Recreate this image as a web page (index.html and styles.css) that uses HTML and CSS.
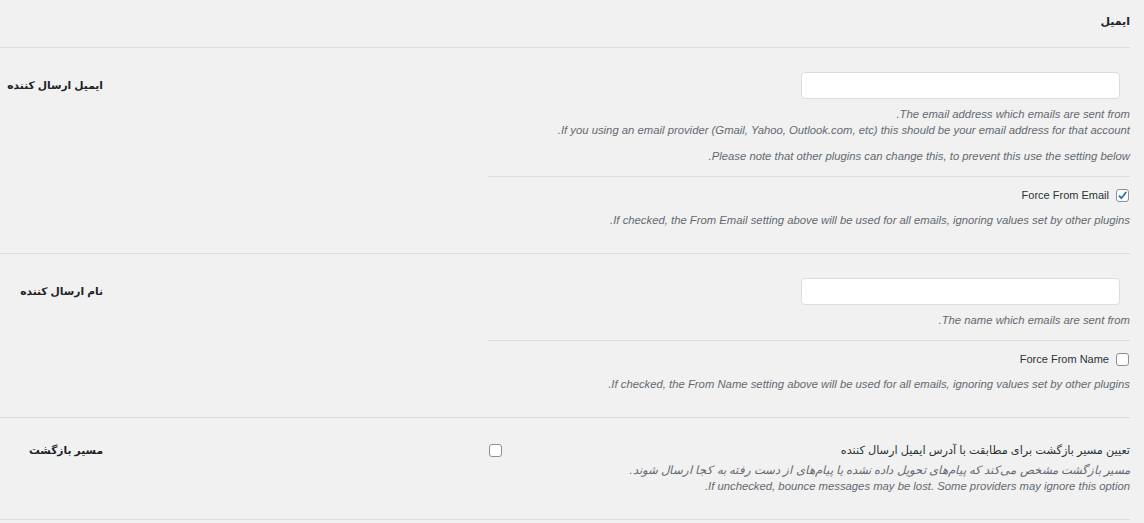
FILE: index.html
```html
<!DOCTYPE html>
<html lang="fa" dir="rtl">
<head>
    <meta charset="UTF-8">
    <meta name="viewport" content="width=device-width, initial-scale=1.0">
    <title>ایمیل</title>
    <link rel="stylesheet" href="styles.css">
</head>
<body>
    <div class="wrap">
        <h2 class="section-title">ایمیل</h2>

        <div class="setting">
            <div class="setting-label setting-label--input">ایمیل ارسال کننده</div>
            <div class="setting-field">
                <input class="text-input" type="text">
                <p class="desc">The email address which emails are sent from.</p>
                <p class="desc">If you using an email provider (Gmail, Yahoo, Outlook.com, etc) this should be your email address for that account.</p>
                <p class="desc desc--spaced">Please note that other plugins can change this, to prevent this use the setting below.</p>
                <div class="sub">
                    <div class="check-line">
                        <span class="box box--checked">
                            <svg viewBox="0 0 13 13" width="13" height="13"><path d="M3 6.6l2.4 2.6L10.2 3" fill="none" stroke="#2271b1" stroke-width="1.8"/></svg>
                        </span>
                        <span class="check-text">Force From Email</span>
                    </div>
                    <p class="desc desc--after-check">If checked, the From Email setting above will be used for all emails, ignoring values set by other plugins.</p>
                </div>
            </div>
        </div>

        <div class="setting">
            <div class="setting-label setting-label--input">نام ارسال کننده</div>
            <div class="setting-field">
                <input class="text-input" type="text">
                <p class="desc">The name which emails are sent from.</p>
                <div class="sub">
                    <div class="check-line">
                        <span class="box"></span>
                        <span class="check-text">Force From Name</span>
                    </div>
                    <p class="desc desc--after-check">If checked, the From Name setting above will be used for all emails, ignoring values set by other plugins.</p>
                </div>
            </div>
        </div>

        <div class="setting">
            <div class="setting-label">مسیر بازگشت</div>
            <div class="setting-field">
                <div class="check-line check-line--wide">
                    <span class="check-text check-text--fa">تعیین مسیر بازگشت برای مطابقت با آدرس ایمیل ارسال کننده</span>
                    <span class="box"></span>
                </div>
                <p class="desc desc--near desc--fa">مسیر بازگشت مشخص می‌کند که پیام‌های تحویل داده نشده یا پیام‌های از دست رفته به کجا ارسال شوند.</p>
                <p class="desc">If unchecked, bounce messages may be lost. Some providers may ignore this option.</p>
            </div>
        </div>
    </div>
</body>
</html>
```

FILE: styles.css
```css
*{
    box-sizing: border-box;
}
body{
    margin: 0;
    background-color: #f1f1f1;
    font-family: "Liberation Sans", "DejaVu Sans", sans-serif;
    font-size: 11px;
    color: #3c434a;
}
.wrap{
    margin-right: 14px;
}
.section-title{
    margin: 0;
    padding: 13px 0 18px;
    font-size: 11px;
    line-height: 16px;
    color: #1d2327;
    border-bottom: 1px solid #dcdcde;
}
.setting{
    display: flex;
    flex-direction: row-reverse;
    justify-content: space-between;
    padding: 24px 0 25px;
    border-bottom: 1px solid #dcdcde;
}
.setting-label{
    width: 103px;
    font-weight: bold;
    font-size: 10.7px;
    line-height: 16px;
    color: #1d2327;
}
.setting-label--input{
    padding-top: 5px;
}
.setting-field{
    width: 642px;
}
.text-input{
    display: block;
    width: 319px;
    height: 27px;
    margin: 0 10px 7px 0;
    border: 1px solid #dcdcde;
    border-radius: 4px;
    background: #fff;
}
.desc{
    margin: 0;
    font-size: 11.3px;
    font-style: italic;
    line-height: 16px;
    color: #646970;
}
.desc--fa{
    font-size: 11.7px;
}
.desc--spaced{
    margin-top: 10px;
}
.desc--after-check{
    margin-top: 9px;
}
.desc--near{
    margin-top: 4px;
}
.sub{
    margin-top: 12px;
    padding-top: 10px;
    border-top: 1px solid #dcdcde;
}
.check-line{
    display: flex;
    align-items: center;
    gap: 6px;
    height: 16px;
    line-height: 16px;
}
.check-line--wide{
    justify-content: space-between;
}
.check-text{
    color: #2c3338;
}
.check-text--fa{
    font-size: 11.3px;
}
.box{
    width: 13px;
    height: 13px;
    margin: 0 1px;
    border: 1px solid #8c8f94;
    border-radius: 3px;
    background: #fff;
    display: flex;
    align-items: center;
    justify-content: center;
}
.box svg{
    display: block;
    flex: none;
}
```
